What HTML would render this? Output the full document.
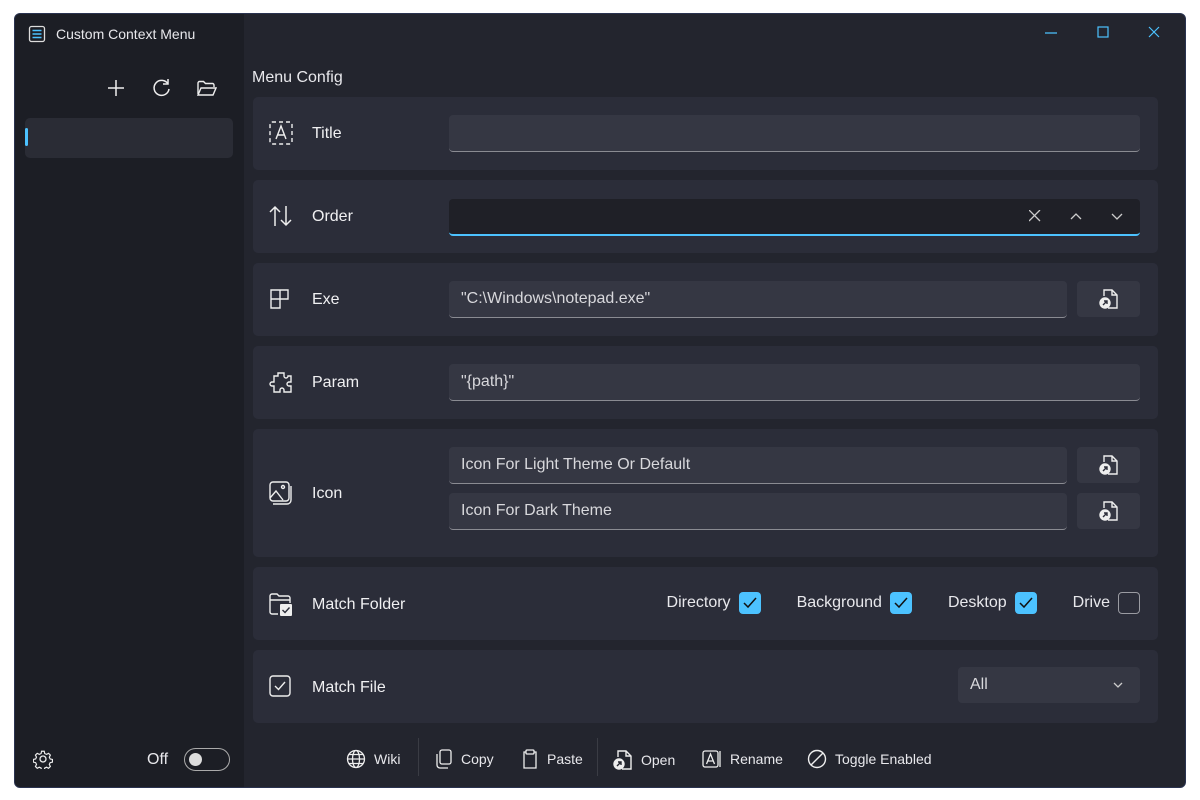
<!DOCTYPE html><html><head><style>
*{box-sizing:border-box;margin:0;padding:0}
body{width:1200px;height:800px;background:#fff;font-family:"Liberation Sans",sans-serif;color:#e8e8ec;position:relative;overflow:hidden}
.win{position:absolute;left:14px;top:13px;width:1172px;height:775px;background:#23252e;border:1px solid #2a3350;border-radius:6px;overflow:hidden}
.side{position:absolute;left:0;top:0;width:229px;height:100%;background:#1c1e25}
.abs{position:absolute}
.card{position:absolute;left:238px;width:905px;background:#2b2d39;border-radius:5px}
.lbl{position:absolute;left:59px;font-size:16px;color:#f0f0f2}
.ic{position:absolute;left:16px}
.inp{position:absolute;background:#353743;border-radius:4px;border-bottom:1px solid #8a8b92;font-size:16px;color:#d8d8dc;padding:9px 12px;height:37px}
.btn{position:absolute;width:63px;height:36px;background:#353743;border-radius:4px}
.cb{display:inline-block;width:22px;height:22px;border-radius:4px;background:#4cc2ff;vertical-align:middle;margin-left:8px;position:relative}
.cb svg{position:absolute;left:4px;top:5px}
.tb{position:absolute;top:735px;font-size:14px;color:#e8e8ec;display:flex;align-items:center;gap:8px}
</style></head><body>
<div class="win">
<div class="side"></div>
<svg class="abs" style="left:13px;top:11px" width="18" height="18" viewBox="0 0 18 18" fill="none" stroke="#ddd" stroke-width="1.3"><rect x="1.5" y="1.5" width="15" height="15" rx="2"/><path d="M4.5 5.5h9M4.5 9h9M4.5 12.5h9" stroke="#4cc2ff" stroke-width="1.5"/></svg>
<div class="abs" style="left:41px;top:12px;font-size:14px">Custom Context Menu</div>
<svg class="abs" style="left:1030px;top:12px" width="120" height="14" fill="none" stroke="#4cc2ff" stroke-width="1.2"><path d="M0 7h12"/><rect x="53" y="1" width="10" height="10"/><path d="M104 1l10 10M114 1l-10 10"/></svg>
<svg class="abs" style="left:92px;top:65px" width="18" height="18" fill="none" stroke="#eee" stroke-width="1.5"><path d="M9 1v16M1 9h16"/></svg>
<svg class="abs" style="left:137px;top:64px" width="20" height="20" fill="none" stroke="#eee" stroke-width="1.5"><path d="M16 6A7.5 7.5 0 1 0 17 11"/><path d="M16 1v5h-5"/></svg>
<svg class="abs" style="left:182px;top:66px" width="20" height="17" fill="none" stroke="#eee" stroke-width="1.4"><path d="M1 14V3a1.5 1.5 0 0 1 1.5-1.5h4l2 2h7a1.5 1.5 0 0 1 1.5 1.5v2"/><path d="M1 15l3-7h15l-3 7z"/></svg>
<div class="abs" style="left:10px;top:104px;width:208px;height:40px;background:#2a2c35;border-radius:5px"></div>
<div class="abs" style="left:10px;top:114px;width:3px;height:18px;background:#4cc2ff;border-radius:2px"></div>
<div class="abs" style="left:237px;top:55px;font-size:16px">Menu Config</div>

<div class="card" style="top:83px;height:73px"><svg class="ic" style="top:24px" width="24" height="24" fill="none" stroke="#eee" stroke-width="1.4"><rect x="1" y="1" width="22" height="22" rx="2" stroke-dasharray="4 3"/><path d="M7 18l5-13 5 13M8.5 14h7"/></svg><div class="lbl" style="top:28px">Title</div>
<div class="inp" style="left:196px;top:18px;width:691px"></div></div>

<div class="card" style="top:166px;height:73px"><svg class="ic" style="top:25px" width="24" height="22" fill="none" stroke="#eee" stroke-width="1.5"><path d="M6 21V2M1 7l5-5 5 5M17 1v19M12 15l5 5 5-5"/></svg><div class="lbl" style="top:28px">Order</div>
<div class="inp" style="left:196px;top:19px;width:691px;background:#1f2027;border-bottom:2px solid #4cc2ff"></div>
<svg class="abs" style="left:776px;top:30px" width="110" height="12" fill="none" stroke="#ccc" stroke-width="1.3"><path d="M0 0l11 11M11 0L0 11M42 9l5-5 5 5M83 4l5 5 5-5"/></svg></div>

<div class="card" style="top:249px;height:73px"><svg class="ic" style="top:25px" width="22" height="22" fill="none" stroke="#eee" stroke-width="1.4"><path d="M2 2h17v9H11v9H2zM2 11h9M11 2v9"/></svg><div class="lbl" style="top:28px">Exe</div>
<div class="inp" style="left:196px;top:18px;width:618px">"C:\Windows\notepad.exe"</div>
<div class="btn" style="left:824px;top:18px"><svg style="position:absolute;left:22px;top:7px" width="20" height="22" fill="none" stroke="#eee" stroke-width="1.4"><path d="M5 8V2h8l5 5v13H9"/><path d="M13 2v5h5"/><circle cx="6" cy="15" r="5" fill="#eee"/><path d="M4 17l4-4M5 13h3v3" stroke="#2b2d39"/></svg></div></div>

<div class="card" style="top:332px;height:73px"><svg class="ic" style="top:25px" width="24" height="24" fill="none" stroke="#eee" stroke-width="1.4"><path d="M9 2h6v3a2 2 0 0 0 4 0h0v0h3v6h-2a2 2 0 0 0 0 4h2v6H15v-2a2 2 0 0 0-4 0v2H5v-6h-2a2 2 0 0 1 0-4h2V5h4z"/></svg><div class="lbl" style="top:28px">Param</div>
<div class="inp" style="left:196px;top:18px;width:691px">"{path}"</div></div>

<div class="card" style="top:415px;height:128px"><svg class="ic" style="top:52px" width="24" height="24" fill="none" stroke="#eee" stroke-width="1.4"><rect x="1" y="1" width="19" height="19" rx="3"/><path d="M1 17l6-7 7 9"/><circle cx="14" cy="6" r="1.5"/><path d="M4 23h14a4 4 0 0 0 4-4V5"/></svg><div class="lbl" style="top:56px">Icon</div>
<div class="inp" style="left:196px;top:18px;width:618px">Icon For Light Theme Or Default</div>
<div class="btn" style="left:824px;top:18px"><svg style="position:absolute;left:22px;top:7px" width="20" height="22" fill="none" stroke="#eee" stroke-width="1.4"><path d="M5 8V2h8l5 5v13H9"/><path d="M13 2v5h5"/><circle cx="6" cy="15" r="5" fill="#eee"/><path d="M4 17l4-4M5 13h3v3" stroke="#2b2d39"/></svg></div>
<div class="inp" style="left:196px;top:64px;width:618px">Icon For Dark Theme</div>
<div class="btn" style="left:824px;top:64px"><svg style="position:absolute;left:22px;top:7px" width="20" height="22" fill="none" stroke="#eee" stroke-width="1.4"><path d="M5 8V2h8l5 5v13H9"/><path d="M13 2v5h5"/><circle cx="6" cy="15" r="5" fill="#eee"/><path d="M4 17l4-4M5 13h3v3" stroke="#2b2d39"/></svg></div></div>

<div class="card" style="top:553px;height:73px"><svg class="ic" style="top:26px" width="26" height="24" fill="none" stroke="#eee" stroke-width="1.4"><path d="M9 21H3a2 2 0 0 1-2-2V3a2 2 0 0 1 2-2h5l2 2h9a2 2 0 0 1 2 2v5M1 7h20"/><rect x="11" y="11" width="12" height="12" rx="1" fill="#eee" stroke="none"/><path d="M13.5 17l2.5 2.5 4.5-5" stroke="#2b2d39"/></svg><div class="lbl" style="top:29px">Match Folder</div>
<div class="abs" style="right:18px;top:25px;font-size:16px;white-space:nowrap">
Directory<span class="cb"><svg width="14" height="12" fill="none" stroke="#111" stroke-width="1.5"><path d="M1 6l4 4 8-9"/></svg></span><span style="margin-left:36px">Background</span><span class="cb"><svg width="14" height="12" fill="none" stroke="#111" stroke-width="1.5"><path d="M1 6l4 4 8-9"/></svg></span><span style="margin-left:36px">Desktop</span><span class="cb"><svg width="14" height="12" fill="none" stroke="#111" stroke-width="1.5"><path d="M1 6l4 4 8-9"/></svg></span><span style="margin-left:36px">Drive</span><span class="cb" style="background:transparent;border:1px solid #9a9ba2"></span></div></div>

<div class="card" style="top:636px;height:73px"><svg class="ic" style="top:25px" width="22" height="22" fill="none" stroke="#eee" stroke-width="1.4"><rect x="1" y="1" width="20" height="20" rx="3"/><path d="M6 11l3.5 3.5L16 7"/></svg><div class="lbl" style="top:29px">Match File</div>
<div class="inp" style="left:705px;top:17px;width:182px;height:36px;border-bottom:none">All</div>
<svg class="abs" style="left:860px;top:32px" width="10" height="6" fill="none" stroke="#ccc" stroke-width="1.3"><path d="M1 1l4 4 4-4"/></svg></div>

<svg class="abs" style="left:18px;top:735px" width="20" height="20" fill="none" stroke="#eee" stroke-width="1.3"><circle cx="10" cy="10" r="3"/><path d="M8.5 1.5h3l.5 2.5 2 1 2.3-1.2 2 2-1.2 2.3 1 2 2.5.5v3l-2.5.5-1 2 1.2 2.3-2 2-2.3-1.2-2 1-.5 2.5h-3l-.5-2.5-2-1-2.3 1.2-2-2 1.2-2.3-1-2-2.5-.5v-3l2.5-.5 1-2-1.2-2.3 2-2 2.3 1.2 2-1z" transform="scale(.9) translate(1 1)"/></svg>
<div class="abs" style="left:132px;top:737px;font-size:16px">Off</div>
<div class="abs" style="left:169px;top:734px;width:46px;height:23px;border:1px solid #aaa;border-radius:12px"><div style="position:absolute;left:4px;top:4px;width:13px;height:13px;border-radius:50%;background:#ddd"></div></div>
<div class="tb" style="left:331px"><svg width="20" height="20" fill="none" stroke="#eee" stroke-width="1.3"><circle cx="10" cy="10" r="8.5"/><ellipse cx="10" cy="10" rx="3.5" ry="8.5"/><path d="M1.5 10h17M3 5.5h14M3 14.5h14"/></svg>Wiki</div>
<div class="abs" style="left:403px;top:724px;width:1px;height:38px;background:#3a3c44"></div>
<div class="tb" style="left:420px"><svg width="18" height="20" fill="none" stroke="#eee" stroke-width="1.3"><rect x="5" y="1" width="11" height="14" rx="2"/><path d="M2 5v11a3 3 0 0 0 3 3h8"/></svg>Copy</div>
<div class="tb" style="left:506px"><svg width="18" height="20" fill="none" stroke="#eee" stroke-width="1.3"><path d="M5 3H3v16h12V3h-2"/><rect x="5" y="1" width="8" height="4" rx="1"/></svg>Paste</div>
<div class="abs" style="left:582px;top:724px;width:1px;height:38px;background:#3a3c44"></div>
<div class="tb" style="left:598px"><svg width="20" height="22" fill="none" stroke="#eee" stroke-width="1.4"><path d="M5 8V2h8l5 5v13H9"/><path d="M13 2v5h5"/><circle cx="6" cy="15" r="5" fill="#eee"/><path d="M4 17l4-4M5 13h3v3" stroke="#23252e"/></svg>Open</div>
<div class="tb" style="left:687px"><svg width="20" height="20" fill="none" stroke="#eee" stroke-width="1.3"><rect x="1" y="2" width="15" height="16" rx="2"/><path d="M4.5 15l4-10 4 10M5.5 12h6M18 2v16"/></svg>Rename</div>
<div class="tb" style="left:792px"><svg width="20" height="20" fill="none" stroke="#eee" stroke-width="1.4"><circle cx="10" cy="10" r="8.5"/><path d="M4 16L16 4"/></svg>Toggle Enabled</div>
</div>
</body></html>
